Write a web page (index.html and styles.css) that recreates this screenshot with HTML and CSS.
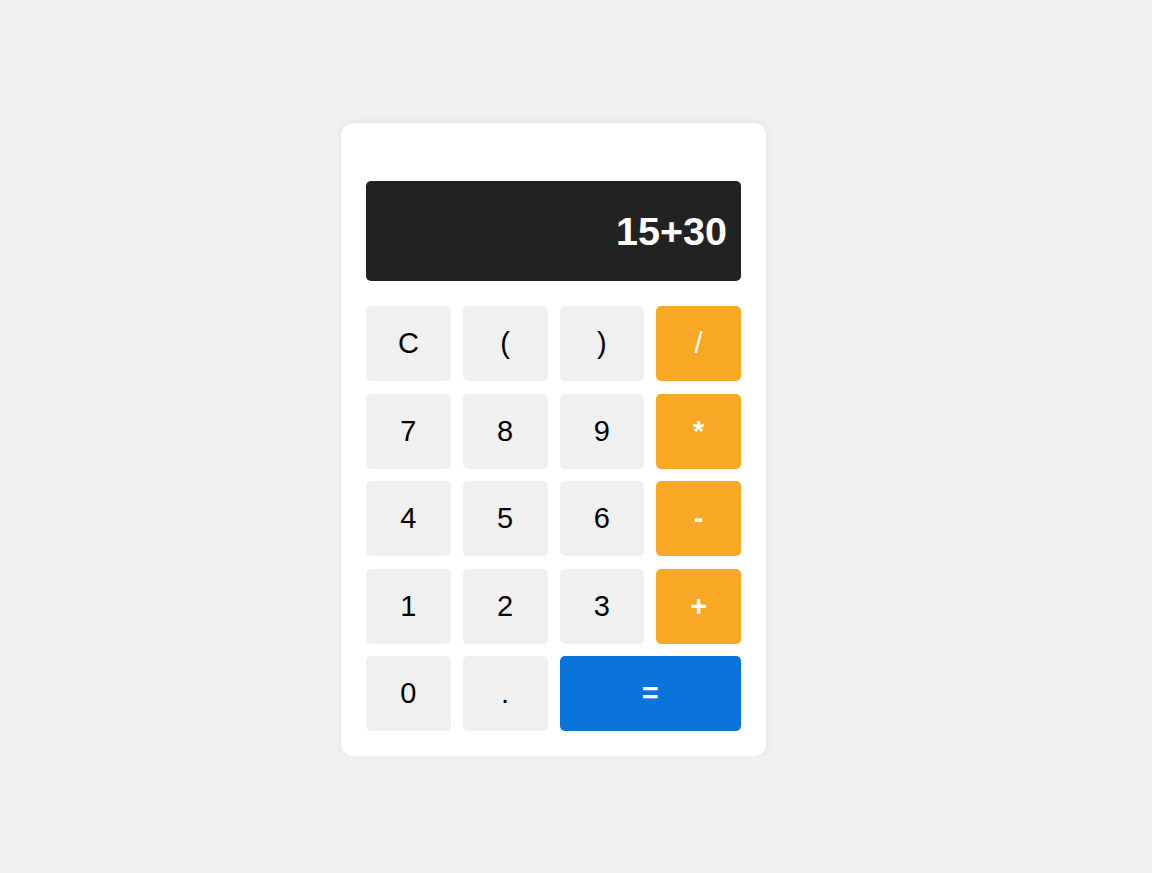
FILE: index.html
```html
<!DOCTYPE html>
<html>
<head>
<meta charset="utf-8">
<link rel="stylesheet" href="styles.css">
</head>
<body>
<div class="calculator">
  <div class="display">15+30</div>
  <div class="keys">
    <button class="key">C</button>
    <button class="key">(</button>
    <button class="key">)</button>
    <button class="key op op-thin">/</button>
    <button class="key">7</button>
    <button class="key">8</button>
    <button class="key">9</button>
    <button class="key op">*</button>
    <button class="key">4</button>
    <button class="key">5</button>
    <button class="key">6</button>
    <button class="key op">-</button>
    <button class="key">1</button>
    <button class="key">2</button>
    <button class="key">3</button>
    <button class="key op">+</button>
    <button class="key">0</button>
    <button class="key">.</button>
    <button class="key equals">=</button>
  </div>
</div>
</body>
</html>
```
FILE: styles.css
```css
html, body {
  margin: 0;
  padding: 0;
  background: #f0f0f0;
  font-family: "Liberation Sans", Arial, sans-serif;
}
body {
  padding: 123px 0 0 341px;
}
.calculator {
  width: 375px;
  background: #ffffff;
  border-radius: 12px;
  padding: 58px 25px 25px;
  box-shadow: 0 0 10px rgba(0, 0, 0, 0.06);
}
.display {
  height: 100px;
  background: #222222;
  color: #ffffff;
  border-radius: 5px;
  box-sizing: border-box;
  padding: 0 14px;
  display: flex;
  align-items: center;
  justify-content: flex-end;
  font-size: 39.5px;
  font-weight: bold;
  margin-bottom: 25px;
}
.keys {
  display: grid;
  grid-template-columns: repeat(4, 1fr);
  grid-auto-rows: 75px;
  column-gap: 12px;
  row-gap: 12.5px;
}
.key {
  border: none;
  border-radius: 5px;
  background: #f0f0f0;
  color: #000000;
  font-family: "Liberation Sans", Arial, sans-serif;
  font-size: 29px;
  padding: 0;
  margin: 0;
}
.key.op {
  background: #f9a826;
  color: #ffffff;
  font-weight: bold;
}
.key.op-thin {
  font-weight: normal;
}
.key.equals {
  background: #0a74da;
  color: #ffffff;
  font-weight: bold;
  grid-column: span 2;
}
```
